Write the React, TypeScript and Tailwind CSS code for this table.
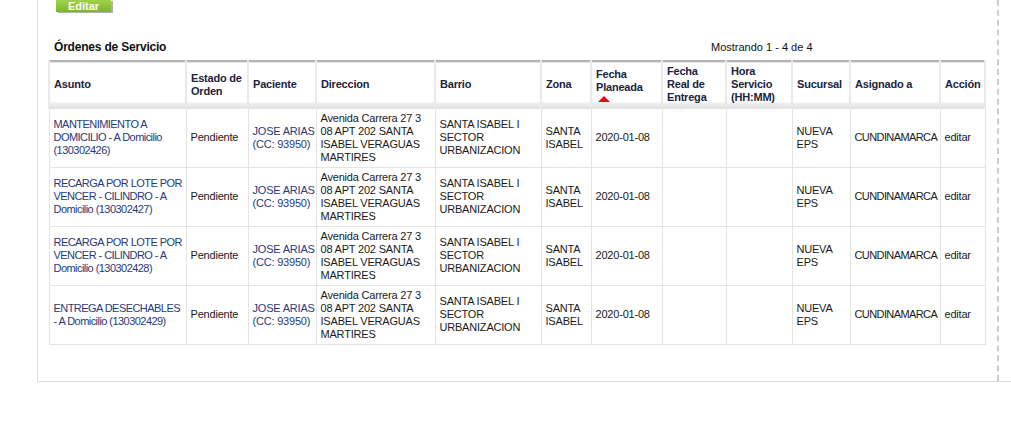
import React from "react";

type Orden = {
  asunto: string[];
  estado: string;
  paciente: string[];
  direccion: string[];
  barrio: string[];
  zona: string[];
  fecha: string;
  sucursal: string[];
  asignado: string;
};

const base = {
  estado: "Pendiente",
  paciente: ["JOSE ARIAS", "(CC: 93950)"],
  direccion: ["Avenida Carrera 27 3", "08 APT 202 SANTA", "ISABEL VERAGUAS", "MARTIRES"],
  barrio: ["SANTA ISABEL I", "SECTOR", "URBANIZACION"],
  zona: ["SANTA", "ISABEL"],
  fecha: "2020-01-08",
  sucursal: ["NUEVA", "EPS"],
  asignado: "CUNDINAMARCA",
};

const ordenes: Orden[] = [
  { ...base, asunto: ["MANTENIMIENTO A", "DOMICILIO - A Domicilio", "(130302426)"] },
  { ...base, asunto: ["RECARGA POR LOTE POR", "VENCER - CILINDRO - A", "Domicilio (130302427)"] },
  { ...base, asunto: ["RECARGA POR LOTE POR", "VENCER - CILINDRO - A", "Domicilio (130302428)"] },
  { ...base, asunto: ["ENTREGA DESECHABLES", "- A Domicilio (130302429)"] },
];

// column widths in px, sum = 936 = table width
const columnas = [
  { titulo: ["Asunto"], w: "w-[137px]" },
  { titulo: ["Estado de", "Orden"], w: "w-[62px]" },
  { titulo: ["Paciente"], w: "w-[68px]" },
  { titulo: ["Direccion"], w: "w-[119px]" },
  { titulo: ["Barrio"], w: "w-[106px]" },
  { titulo: ["Zona"], w: "w-[50px]" },
  { titulo: ["Fecha", "Planeada"], w: "w-[71px]", orden: true },
  { titulo: ["Fecha", "Real de", "Entrega"], w: "w-[64px]" },
  { titulo: ["Hora", "Servicio", "(HH:MM)"], w: "w-[66px]" },
  { titulo: ["Sucursal"], w: "w-[58px]" },
  { titulo: ["Asignado a"], w: "w-[90px]" },
  { titulo: ["Acción"], w: "w-[45px]" },
];

const td = "border border-[#e4e4e4] pl-[4px] pr-[1px] align-middle whitespace-nowrap";

const Lineas = ({ lines }: { lines: string[] }) => (
  <>
    {lines.map((l, i) => (
      <span key={i} className="block">
        {l}
      </span>
    ))}
  </>
);

export default function App() {
  return (
    <div className="h-[426px] w-[1011px] overflow-hidden bg-white font-['Liberation_Sans',Arial,sans-serif] text-[11px] leading-[13px] tracking-[-0.2px] text-[#1a1a1a]">
      <div className="ml-[37px] flex h-[382px] border-b border-l border-[#dcdcdc]">
        {/* main panel with dashed right edge */}
        <div className="w-[961px] border-r-2 border-dashed border-[#cdcdcd]">
          <button className="ml-[18px] block h-[12px] w-[55px] bg-gradient-to-b from-[#9fd349] to-[#7db52e] text-center text-[11px] font-bold leading-[11px] tracking-normal text-white shadow-[2px_1px_0_#b0b0b0]">
            Editar
          </button>

          <div className="ml-[11px] mt-[29px] grid w-[936px] grid-cols-[662px_1fr] items-center">
            <h3 className="pl-[5px] text-[12px] font-bold text-[#111]">Órdenes de Servicio</h3>
            <span className="text-[#111] tracking-normal">Mostrando 1 - 4 de 4</span>
          </div>

          <table className="ml-[10px] mt-[6px] w-[936px] table-fixed border-collapse">
            <colgroup>
              {columnas.map((c) => (
                <col key={c.titulo.join(" ")} className={c.w} />
              ))}
            </colgroup>
            <thead>
              <tr className="h-[47px] border-t-2 border-[#b3b3b3] bg-[linear-gradient(to_bottom,#ffffff_0px,#ffffff_39px,#f0f0f0_40px,#dcdcdc_47px)]">
                {columnas.map((c) => (
                  <th
                    key={c.titulo.join(" ")}
                    className="border-x-2 border-[#e9e9e9] pl-[4px] pr-[1px] text-left align-middle font-bold whitespace-nowrap text-[#1b2440]"
                  >
                    <Lineas lines={c.titulo} />
                    {c.orden && (
                      <span className="mt-[2px] ml-[2px] block h-0 w-0 border-x-[6px] border-b-[6px] border-x-transparent border-b-[#d11212]" />
                    )}
                  </th>
                ))}
              </tr>
            </thead>
            <tbody>
              {ordenes.map((o, i) => (
                <tr key={i} className="h-[59px]">
                  <td className={`${td} tracking-[-0.55px] text-[#2a3978]`}>
                    <Lineas lines={o.asunto} />
                  </td>
                  <td className={td}>{o.estado}</td>
                  <td className={`${td} text-[#2a3978]`}>
                    <Lineas lines={o.paciente} />
                  </td>
                  <td className={td}>
                    <Lineas lines={o.direccion} />
                  </td>
                  <td className={td}>
                    <Lineas lines={o.barrio} />
                  </td>
                  <td className={td}>
                    <Lineas lines={o.zona} />
                  </td>
                  <td className={td}>{o.fecha}</td>
                  <td className={td}></td>
                  <td className={td}></td>
                  <td className={td}>
                    <Lineas lines={o.sucursal} />
                  </td>
                  <td className={`${td} tracking-[-0.6px]`}>{o.asignado}</td>
                  <td className={td}>editar</td>
                </tr>
              ))}
            </tbody>
          </table>
        </div>
      </div>
    </div>
  );
}
